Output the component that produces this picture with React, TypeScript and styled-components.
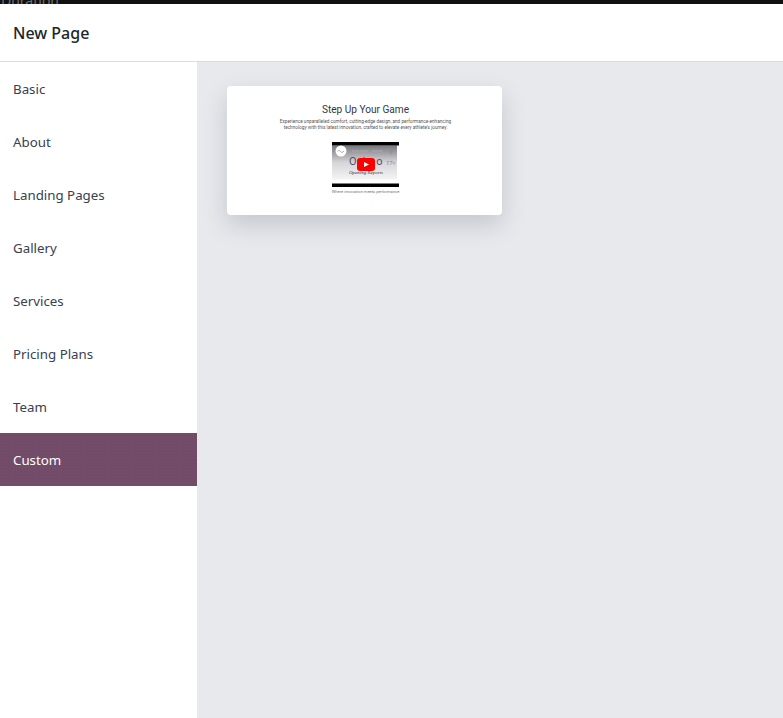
import React from "react";
import styled, { createGlobalStyle } from "styled-components";

const GlobalStyle = createGlobalStyle`
  html, body {
    margin: 0;
    padding: 0;
    height: 100%;
    overflow: hidden;
    background: #fff;
  }
  body {
    font-family: "Noto Sans", "Open Sans", sans-serif;
  }
`;

const Page = styled.div`
  width: 783px;
  height: 718px;
  display: flex;
  flex-direction: column;
  overflow: hidden;
`;

const TopStrip = styled.div`
  height: 4px;
  flex: none;
  padding-left: 1px;
  background: #111;
  color: #6f6f6f;
  font-size: 14px;
  line-height: 1px;
  overflow: hidden;
`;

const Header = styled.header`
  height: 58px;
  flex: none;
  display: flex;
  align-items: center;
  padding: 0 13px;
  box-sizing: border-box;
  background: #fff;
  border-bottom: 1px solid #dcdcdc;
`;

const Title = styled.h1`
  margin: 0;
  font-size: 16px;
  font-weight: 500;
  color: #212529;
`;

const Body = styled.div`
  flex: 1;
  display: flex;
  min-height: 0;
`;

const Sidebar = styled.nav`
  width: 197px;
  flex: none;
  background: #fff;
  display: flex;
  flex-direction: column;
`;

const NavItem = styled.div<{ $active?: boolean }>`
  height: 53px;
  flex: none;
  display: flex;
  align-items: center;
  padding: 0 13px;
  font-size: 13.3px;
  color: ${(p) => (p.$active ? "#fff" : "#374151")};
  background-color: ${(p) => (p.$active ? "#714b67" : "transparent")};
  background-image: ${(p) =>
    p.$active ? "radial-gradient(rgba(255, 255, 255, 0.035) 0.7px, transparent 0.8px)" : "none"};
  background-size: 3px 3px;
`;

const Canvas = styled.main`
  flex: 1;
  background: #e7e9ed;
  padding: 24px 30px;
`;

const Card = styled.div`
  width: 275px;
  height: 129px;
  box-sizing: border-box;
  padding: 18px 0 0 2px;
  background: #fff;
  border-radius: 4px;
  box-shadow: 0 10px 25px rgba(60, 66, 82, 0.2);
  display: flex;
  flex-direction: column;
  align-items: center;
  font-family: Roboto, sans-serif;
`;

const CardTitle = styled.h2`
  margin: 0;
  font-size: 10.1px;
  line-height: 12px;
  font-weight: 400;
  color: #333840;
`;

const CardText = styled.p`
  margin: 3px 0 0;
  width: 180px;
  font-size: 4.7px;
  line-height: 6.2px;
  text-align: center;
  color: #555;
`;

const Video = styled.div`
  margin-top: 10.6px;
  width: 67px;
  height: 45px;
  display: block;
`;

const Caption = styled.p`
  margin: 2px 0 0;
  font-size: 4.05px;
  line-height: 6px;
  color: #777;
`;

const navItems = ["Basic", "About", "Landing Pages", "Gallery", "Services", "Pricing Plans", "Team", "Custom"];

const VideoThumb = () => (
  <Video>
    <svg width="67" height="45" viewBox="0 0 67 45">
      <defs>
        <linearGradient id="thumbBg" x1="0" y1="0" x2="0" y2="1">
          <stop offset="0" stopColor="#77777c" />
          <stop offset="0.5" stopColor="#d6d6d9" />
          <stop offset="1" stopColor="#f4f4f4" />
        </linearGradient>
      </defs>
      <rect width="67" height="45" fill="#fff" />
      <rect y="3.5" width="65" height="34" fill="url(#thumbBg)" />
      <rect width="67" height="3.5" fill="#000" />
      <rect y="41.5" width="67" height="3.5" fill="#000" />
      <circle cx="9" cy="9" r="5.5" fill="#fff" />
      <path d="M5.5 9.5c1-1.5 2-1.5 3 0s2 1 3.5-.5" stroke="#777" strokeWidth="0.6" fill="none" />
      <path d="M20 9h16M40 9h10" stroke="#a8a8ac" strokeWidth="1.6" strokeDasharray="2 0.7" />
      <path d="M59 7v6M57 10h4" stroke="#888" strokeWidth="0.5" />
      <text x="17" y="23" fontFamily="Roboto, sans-serif" fontSize="11" letterSpacing="2.4" fill="#5d4a5d">
        Odoo
      </text>
      <text x="54" y="23" fontFamily="Roboto, sans-serif" fontSize="6" fontStyle="italic" fill="#8a7a7a">
        17&lt;
      </text>
      <text x="17" y="32" fontFamily="Liberation Serif, serif" fontSize="5" fontStyle="italic" fill="#333">
        Opening Reports
      </text>
      <rect x="25" y="16" width="18" height="13" rx="3" fill="#f00" />
      <path d="M32 20l5 2.5-5 2.5z" fill="#fff" />
    </svg>
  </Video>
);

export default function App() {
  return (
    <Page>
      <GlobalStyle />
      <TopStrip>Duration</TopStrip>
      <Header>
        <Title>New Page</Title>
      </Header>
      <Body>
        <Sidebar>
          {navItems.map((item) => (
            <NavItem key={item} $active={item === "Custom"}>
              {item}
            </NavItem>
          ))}
        </Sidebar>
        <Canvas>
          <Card>
            <CardTitle>Step Up Your Game</CardTitle>
            <CardText>
              Experience unparalleled comfort, cutting-edge design, and performance-enhancing technology with this
              latest innovation, crafted to elevate every athlete's journey.
            </CardText>
            <VideoThumb />
            <Caption>Where innovation meets performance</Caption>
          </Card>
        </Canvas>
      </Body>
    </Page>
  );
}
